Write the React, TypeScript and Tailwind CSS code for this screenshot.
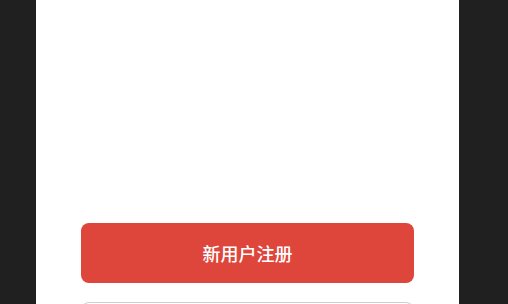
export default function App() {
  return (
    <div className="min-h-screen w-full bg-[#202020] overflow-hidden">
      <div
        className="ml-[36px] w-[423px] h-[304px] bg-white flex flex-col items-center pt-[223px] gap-[19px]"
        style={{ fontFamily: '"Noto Sans CJK SC", "Noto Sans", sans-serif' }}
      >
        <button className="w-[333px] h-[60px] shrink-0 rounded-[8px] bg-[#de453b] text-white text-[18px] font-medium">
          新用户注册
        </button>
        <div className="w-[333px] h-[60px] shrink-0 rounded-[8px] border border-[#cfcfcf] bg-white" />
      </div>
    </div>
  );
}
